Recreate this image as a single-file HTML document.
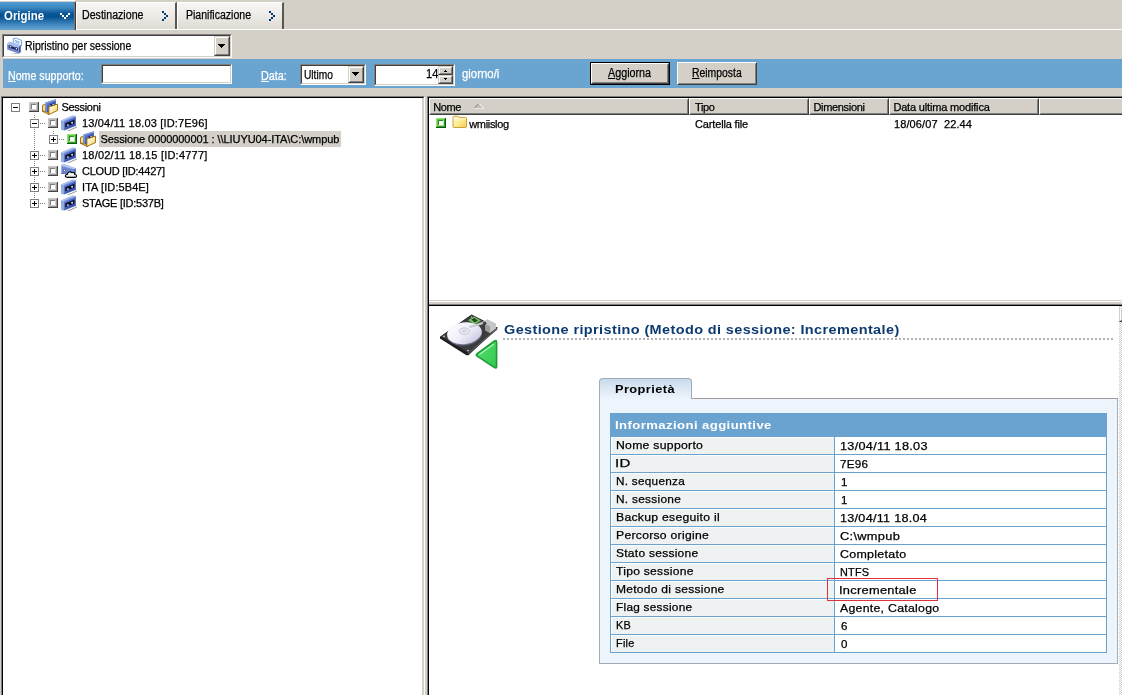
<!DOCTYPE html>
<html><head><meta charset="utf-8">
<style>
*{box-sizing:border-box;margin:0;padding:0}
html,body{width:1122px;height:695px;overflow:hidden;background:#d4d0c8;font-family:"Liberation Sans",sans-serif;font-size:11px;color:#000}
.abs{position:absolute}
#root{position:relative;width:1122px;height:695px;overflow:hidden;will-change:transform}
.t{position:absolute;white-space:nowrap;line-height:13px;font-size:11px;transform-origin:0 0;-webkit-text-stroke:0.25px currentColor}
.v{font-size:11px;letter-spacing:.55px}
/* tabs */
.tab{position:absolute;top:2px;height:27px;font-size:12px;white-space:nowrap}
.tab.g{background:linear-gradient(#f7f6f4 0%,#efede9 40%,#dedbd4 100%);border-top:1px solid #fff;border-left:1px solid #fff;border-right:2px solid #5a5751;}
.tab.sel{background:linear-gradient(#4f9ad0 0%,#3c88c2 20%,#0a5595 42%,#05508f 52%,#3a82bc 78%,#6ba6d4 100%)}
/* sunken */
.sunk{position:absolute;background:#fff;border:1px solid;border-color:#808080 #fff #fff #808080;}
.sunk:before{content:"";position:absolute;left:0;top:0;right:0;bottom:0;border:1px solid;border-color:#404040 #d4d0c8 #d4d0c8 #404040;pointer-events:none}
.sunk.p:before{border-color:#000 #d4d0c8 #d4d0c8 #000}
.btn{position:absolute;background:#d4d0c8;border:1px solid;border-color:#fff #404040 #404040 #fff;}
.btn:before{content:"";position:absolute;left:0;top:0;right:0;bottom:0;border:1px solid;border-color:#d4d0c8 #808080 #808080 #d4d0c8}
.cbtn{position:absolute;background:#d4d0c8;border:1px solid;border-color:#d4d0c8 #404040 #404040 #d4d0c8;}
.cbtn:before{content:"";position:absolute;left:0;top:0;right:0;bottom:0;border:1px solid;border-color:#fff #808080 #808080 #fff}
.arr{position:absolute;width:0;height:0;border-left:4px solid transparent;border-right:4px solid transparent;border-top:4px solid #000}
.u{text-decoration:underline}
svg{position:absolute;overflow:visible}
</style></head><body><svg width="0" height="0" style="position:absolute;left:-100px;top:-100px">
<defs>
<linearGradient id="gTape" x1="0" y1="0" x2="1" y2="1"><stop offset="0" stop-color="#7690dc"/><stop offset=".45" stop-color="#4562bc"/><stop offset="1" stop-color="#2a4296"/></linearGradient>
<linearGradient id="gTapeL" x1="0" y1="0" x2="1" y2="0"><stop offset="0" stop-color="#5f7fd0"/><stop offset=".6" stop-color="#a8bcf0"/><stop offset="1" stop-color="#6c88d8"/></linearGradient>
<linearGradient id="gFold" x1="0" y1="0" x2="1" y2="1"><stop offset="0" stop-color="#ffffff"/><stop offset=".45" stop-color="#fdf0bc"/><stop offset="1" stop-color="#efc348"/></linearGradient>
<linearGradient id="gFold2" x1="0" y1="0" x2="1" y2="1"><stop offset="0" stop-color="#fffbe0"/><stop offset=".55" stop-color="#fde98e"/><stop offset="1" stop-color="#f2c94c"/></linearGradient>
<linearGradient id="gCloud" x1="0" y1="0" x2="0" y2="1"><stop offset="0" stop-color="#ffffff"/><stop offset=".6" stop-color="#f2f2f2"/><stop offset="1" stop-color="#cfcfcf"/></linearGradient>
<linearGradient id="gPlat" x1="0" y1="0" x2="1" y2="1"><stop offset="0" stop-color="#ffffff"/><stop offset=".5" stop-color="#f1eff9"/><stop offset=".82" stop-color="#cfd0e6"/><stop offset="1" stop-color="#a4a8c6"/></linearGradient>
<linearGradient id="gArr" x1="0" y1="0" x2="1" y2="1"><stop offset="0" stop-color="#58e070"/><stop offset="1" stop-color="#30c850"/></linearGradient>

<symbol id="ck" viewBox="0 0 10 10">
<rect width="10" height="10" fill="#454545"/><rect width="9" height="9" fill="#c9c9c9"/>
<rect x="1" y="1" width="8" height="8" fill="#9a9a9a"/><rect x="1" y="1" width="7" height="7" fill="#bababa"/>
<rect x="2" y="2" width="6" height="6" fill="#cfcfcf"/><rect x="2" y="2" width="5" height="5" fill="#7e7e7e"/>
<rect x="3" y="3" width="4" height="4" fill="#fff"/>
</symbol>
<symbol id="ckg" viewBox="0 0 10 10">
<rect width="10" height="10" fill="#0b5c12"/><rect width="9" height="9" fill="#8fe06c"/>
<rect x="1" y="1" width="8" height="8" fill="#2f9a2c"/><rect x="1" y="1" width="7" height="7" fill="#66cc48"/>
<rect x="2" y="2" width="6" height="6" fill="#a8ea90"/><rect x="2" y="2" width="5" height="5" fill="#2a8a2a"/>
<rect x="3" y="3" width="4" height="4" fill="#fff"/>
</symbol>

<symbol id="itape" viewBox="0 0 16 16">
<polygon points="5.6,16 16,11.2 16,12.6 8.4,16" fill="#8a8a8a" opacity=".75"/>
<polygon points="0.2,5.3 11.8,0.2 14.8,1.3 3,6" fill="#a9bcf0"/>
<polygon points="0.2,5.3 3,6 3.2,15.6 0.4,15" fill="url(#gTapeL)"/>
<polygon points="3,6 14.8,1.3 14.8,10.7 3.2,15.6" fill="url(#gTape)"/>
<polygon points="3,6 14.8,1.3 14.8,2.4 3,7.1" fill="#7d96da" opacity=".8"/>
<polygon points="4.3,8.3 13.4,4.7 13.4,8.5 4.3,12.2" fill="#0a1030"/>
<circle cx="6.9" cy="10.1" r=".95" fill="#e6e6ee"/><circle cx="11.1" cy="7.7" r=".95" fill="#e6e6ee"/>
</symbol>

<symbol id="ifold" viewBox="0 0 16 16">
<polygon points="0.5,6.3 3.6,5.2 3.6,12.6 0.5,12.4" fill="#f6dc90" stroke="#9c6600" stroke-width=".9"/>
<polygon points="0.5,12.3 7,15.6 7,14 3.2,12.2" fill="#f1cf6a" stroke="#9c6600" stroke-width=".9"/>
<polygon points="3.2,3.4 13.9,0.3 13.9,6 7,8.2 7,13.6 3.4,12.6" fill="url(#gTape)"/>
<polygon points="3.2,3.4 13.9,0.3 13.9,1.8 4.6,4.6 4.8,12.9 3.4,12.6" fill="#8ca6e8" opacity=".85"/>
<polygon points="8.4,5.6 12,4.4 12,6.4 8.4,7.6" fill="#0c1230"/>
<circle cx="11.1" cy="5.6" r=".8" fill="#eee"/><circle cx="8.2" cy="7.3" r=".8" fill="#eee"/>
<polygon points="6.9,7.9 15.5,5.2 15.5,11.5 6.9,15.5" fill="url(#gFold)" stroke="#9c6600" stroke-width=".9" stroke-linejoin="round"/>
</symbol>

<symbol id="icloud" viewBox="0 0 16 16">
<polygon points="0.2,1.9 2.5,1 14.8,5.3 14.8,10.2 0.2,11" fill="#8aa0de"/>
<polygon points="1.2,3.4 13.4,6.8 13.4,10.2 1.2,10.6" fill="#6c86d0"/>
<polygon points="0.2,1.9 2.5,1 14.8,5.3 14.8,6.4 0.2,2.9" fill="#b4c5f3"/>
<polygon points="13.2,6.2 14.8,5.6 14.8,10.2 13.2,10.2" fill="#4a64b6"/>
<polygon points="0.2,10 14.8,9.4 14.8,10.3 0.2,11" fill="#5670c0"/>
<circle cx="3.5" cy="7.5" r="1.3" fill="#3a4f9c"/><circle cx="3.5" cy="7.5" r=".75" fill="#fff"/>
<path d="M6.4 14.4 C3.6 14.4 3.8 11.3 6.3 11.4 C6.5 8.9 9.6 8 10.8 9.8 C12.6 8.8 14 10.2 13.6 11.5 C16.2 11.4 16.2 14.4 13.8 14.4 Z" fill="url(#gCloud)" stroke="#000" stroke-width="1.1" stroke-linejoin="round"/>
</symbol>

<symbol id="ifolder" viewBox="0 0 16 14">
<path d="M1 2.5 Q1 1.3 2.2 1.3 L5.6 1.3 Q6.6 1.3 7 2.4 L13.5 2.4 Q14.5 2.4 14.5 3.4 L14.5 11.6 Q14.5 12.5 13.5 12.5 L2 12.5 Q1 12.5 1 11.6 Z" fill="url(#gFold2)" stroke="#c8962a" stroke-width=".9"/>
<path d="M1.6 3.8 L14 3.8" stroke="#fff8d8" stroke-width=".8" fill="none"/>
</symbol>
</defs></svg>
<div id="root">

<!-- ============ TAB ROW ============ -->
<div class="abs" style="left:0;top:0;width:75px;height:1px;background:#fff"></div>
<div class="abs" style="left:76px;top:29px;width:1046px;height:1px;background:#fff"></div>
<div class="tab sel" style="left:0;width:74px;height:28px"></div><div class="abs" style="left:74px;top:2px;width:1px;height:28px;background:#7d7872"></div><div class="abs" style="left:75px;top:2px;width:1px;height:28px;background:#3c3c3c"></div>
<div class="t" id="t_origine" style="left:4.0px;top:8px;font-size:12px;line-height:16px;font-weight:bold;color:#fff;transform:scaleX(0.9527);-webkit-text-stroke:0">Origine</div>
<svg style="left:60px;top:13px" width="10" height="6" viewBox="0 0 10 6" shape-rendering="crispEdges"><path d="M0 0h2v2h-2zM2 2h2v2h-2zM4 4h2v2h-2zM6 2h2v2h-2zM8 0h2v2h-2z" fill="#fff"/></svg>
<div class="tab g" style="left:76px;width:101px"></div>
<div class="t" id="t_dest" style="left:82.0px;top:7px;font-size:12px;line-height:16px;transform:scaleX(0.8861)">Destinazione</div>
<svg style="left:162px;top:11px" width="6" height="10" viewBox="0 0 6 10" shape-rendering="crispEdges"><path d="M0 0h2v2h-2zM2 2h2v2h-2zM4 4h2v2h-2zM2 6h2v2h-2zM0 8h2v2h-2z" fill="#003c74"/></svg>
<div class="tab g" style="left:177px;width:107px"></div>
<div class="t" id="t_pian" style="left:186.0px;top:7px;font-size:12px;line-height:16px;transform:scaleX(0.8784)">Pianificazione</div>
<svg style="left:269px;top:11px" width="6" height="10" viewBox="0 0 6 10" shape-rendering="crispEdges"><path d="M0 0h2v2h-2zM2 2h2v2h-2zM4 4h2v2h-2zM2 6h2v2h-2zM0 8h2v2h-2z" fill="#003c74"/></svg>

<!-- ============ DROPDOWN ============ -->
<div class="sunk" style="left:2px;top:34px;width:230px;height:24px"></div>
<svg style="left:7px;top:38px" width="16" height="16" viewBox="0 0 16 16">
<polygon points="3,15.9 12,16 14.6,14.2 13.8,13.6" fill="#999" opacity=".5"/>
<polygon points="6.2,0.6 9.4,0.2 14.6,2.4 14.5,8 6.4,6" fill="#eef7ff" stroke="#5b8fd6" stroke-width=".8"/>
<path d="M8 2.4 L12.6 4.2 M8.4 4 L12 5.4" stroke="#6fa0de" stroke-width=".9" fill="none"/>
<polygon points="0.2,5.6 2.6,3.6 13.8,7.2 11.5,9.2" fill="#aabef2"/>
<polygon points="11.5,9.2 13.8,7.2 13.8,13.8 11.5,15.6" fill="#3d55a6"/>
<polygon points="0.2,5.6 11.5,9.2 11.5,15.6 0.2,11.6" fill="#7088d2"/>
<polygon points="0.2,5.6 11.5,9.2 11.5,10 0.2,6.4" fill="#b4c6f4"/>
<polygon points="1.8,7.6 10.9,10.5 10.9,12.4 1.8,9.6" fill="#1a244e"/>
<circle cx="3.5" cy="8.7" r="1.5" fill="#1a244e"/><circle cx="9.4" cy="10.7" r="1.5" fill="#1a244e"/>
<circle cx="3.5" cy="8.7" r=".8" fill="#fff"/><circle cx="9.4" cy="10.7" r=".8" fill="#fff"/>
</svg>
<div class="t" id="t_rip" style="font-size:12px;line-height:16px;left:24.6px;top:38px;transform:scaleX(0.8757)">Ripristino per sessione</div>
<div class="cbtn" style="left:214px;top:36px;width:16px;height:20px"><svg style="left:3px;top:7px" width="7" height="4" viewBox="0 0 7 4" shape-rendering="crispEdges"><path d="M0 0h7v1h-1v1h-1v1h-1v1h-1v-1h-1v-1h-1v-1h-1z" fill="#000"/></svg></div>

<!-- ============ BLUE BAR ============ -->
<div class="abs" style="left:3px;top:59px;width:1119px;height:29px;background:#6aa5d1"></div>
<div class="t" id="t_nome" style="font-size:12px;line-height:16px;left:8.0px;top:68px;color:#fff;transform:scaleX(0.8871)"><span class="u">N</span>ome supporto:</div>
<div class="sunk" style="left:101px;top:64px;width:131px;height:20px"></div>
<div class="t" id="t_data" style="font-size:12px;line-height:16px;left:261.0px;top:68px;color:#fff;transform:scaleX(0.9010)"><span class="u">D</span>ata:</div>
<div class="sunk" style="left:300px;top:64px;width:66px;height:21px"></div>
<div class="t" id="t_ult" style="font-size:12px;line-height:16px;left:304.2px;top:67px;transform:scaleX(0.8477)">Ultimo</div>
<div class="cbtn" style="left:348px;top:66px;width:16px;height:17px"><svg style="left:3px;top:5px" width="7" height="4" viewBox="0 0 7 4" shape-rendering="crispEdges"><path d="M0 0h7v1h-1v1h-1v1h-1v1h-1v-1h-1v-1h-1v-1h-1z" fill="#000"/></svg></div>
<div class="sunk" style="left:374px;top:64px;width:81px;height:22px"></div>
<div class="t" id="t_14" style="font-size:12px;line-height:16px;left:426.0px;top:66px;transform:scaleX(0.9284)">14</div>
<div class="cbtn" style="left:438px;top:66px;width:15px;height:9px"><svg style="left:5px;top:3px" width="3" height="2" viewBox="0 0 3 2" shape-rendering="crispEdges"><path d="M1 0h1v1h1v1h-3v-1h1z" fill="#000"/></svg></div>
<div class="cbtn" style="left:438px;top:75px;width:15px;height:9px"><svg style="left:5px;top:2px" width="3" height="2" viewBox="0 0 3 2" shape-rendering="crispEdges"><path d="M0 0h3v1h-1v1h-1v-1h-1z" fill="#000"/></svg></div>
<div class="t" id="t_giorno" style="font-size:12px;line-height:16px;left:462.0px;top:66px;color:#fff;transform:scaleX(0.9487)">giorno/i</div>
<!-- buttons -->
<div class="abs" style="left:590px;top:62px;width:80px;height:23px;background:#000"></div>
<div class="btn" style="left:591px;top:63px;width:78px;height:21px"></div>
<div class="t" id="t_agg" style="font-size:12px;line-height:16px;left:608.4px;top:65px;transform:scaleX(0.8966)"><span class="u">A</span>ggiorna</div>
<div class="btn" style="left:677px;top:62px;width:80px;height:23px"></div>
<div class="t" id="t_reim" style="font-size:12px;line-height:16px;left:691.8px;top:65px;transform:scaleX(0.8658)"><span class="u">R</span>eimposta</div>

<!-- ============ LEFT TREE ============ -->
<div class="sunk p" style="left:1px;top:96px;width:424px;height:610px"></div><div class="abs" style="left:422px;top:98px;width:1px;height:600px;background:#d4d0c8"></div>
<!--TREE-->
<div class="abs" style="left:11px;top:103px;width:9px;height:9px;border:1px solid #808080;background:#fff"><div class="abs" style="left:1px;top:3px;width:5px;height:1px;background:#000"></div></div>
<svg style="left:29px;top:102px" width="10" height="10"><use href="#ck"/></svg>
<svg style="left:42px;top:99px" width="16" height="16"><use href="#ifold"/></svg>
<div class="t" id="tr0" style="left:61.4px;top:101px;letter-spacing:-0.285px">Sessioni</div>
<div class="abs" style="left:34px;top:115px;width:1px;height:3px;background:repeating-linear-gradient(#808080 0 1px,transparent 1px 2px)"></div>
<div class="abs" style="left:30px;top:119px;width:9px;height:9px;border:1px solid #808080;background:#fff"><div class="abs" style="left:1px;top:3px;width:5px;height:1px;background:#000"></div></div>
<div class="abs" style="left:40px;top:123px;width:5px;height:1px;background:repeating-linear-gradient(90deg,#808080 0 1px,transparent 1px 2px)"></div>
<svg style="left:48px;top:118px" width="10" height="10"><use href="#ck"/></svg>
<svg style="left:61px;top:115px" width="16" height="16"><use href="#itape"/></svg>
<div class="t" id="tr1" style="left:82.0px;top:117px;letter-spacing:0.173px">13/04/11 18.03 [ID:7E96]</div>
<div class="abs" style="left:34px;top:129px;width:1px;height:21px;background:repeating-linear-gradient(#808080 0 1px,transparent 1px 2px)"></div>
<div class="abs" style="left:30px;top:151px;width:9px;height:9px;border:1px solid #808080;background:#fff"><div class="abs" style="left:1px;top:3px;width:5px;height:1px;background:#000"></div><div class="abs" style="left:3px;top:1px;width:1px;height:5px;background:#000"></div></div>
<div class="abs" style="left:40px;top:155px;width:5px;height:1px;background:repeating-linear-gradient(90deg,#808080 0 1px,transparent 1px 2px)"></div>
<svg style="left:48px;top:150px" width="10" height="10"><use href="#ck"/></svg>
<svg style="left:61px;top:147px" width="16" height="16"><use href="#itape"/></svg>
<div class="t" id="tr3" style="left:82.0px;top:149px;letter-spacing:0.218px">18/02/11 18.15 [ID:4777]</div>
<div class="abs" style="left:34px;top:161px;width:1px;height:5px;background:repeating-linear-gradient(#808080 0 1px,transparent 1px 2px)"></div>
<div class="abs" style="left:30px;top:167px;width:9px;height:9px;border:1px solid #808080;background:#fff"><div class="abs" style="left:1px;top:3px;width:5px;height:1px;background:#000"></div><div class="abs" style="left:3px;top:1px;width:1px;height:5px;background:#000"></div></div>
<div class="abs" style="left:40px;top:171px;width:5px;height:1px;background:repeating-linear-gradient(90deg,#808080 0 1px,transparent 1px 2px)"></div>
<svg style="left:48px;top:166px" width="10" height="10"><use href="#ck"/></svg>
<svg style="left:61px;top:163px" width="16" height="16"><use href="#icloud"/></svg>
<div class="t" id="tr4" style="left:82.0px;top:165px;letter-spacing:-0.230px">CLOUD [ID:4427]</div>
<div class="abs" style="left:34px;top:177px;width:1px;height:5px;background:repeating-linear-gradient(#808080 0 1px,transparent 1px 2px)"></div>
<div class="abs" style="left:30px;top:183px;width:9px;height:9px;border:1px solid #808080;background:#fff"><div class="abs" style="left:1px;top:3px;width:5px;height:1px;background:#000"></div><div class="abs" style="left:3px;top:1px;width:1px;height:5px;background:#000"></div></div>
<div class="abs" style="left:40px;top:187px;width:5px;height:1px;background:repeating-linear-gradient(90deg,#808080 0 1px,transparent 1px 2px)"></div>
<svg style="left:48px;top:182px" width="10" height="10"><use href="#ck"/></svg>
<svg style="left:61px;top:179px" width="16" height="16"><use href="#itape"/></svg>
<div class="t" id="tr5" style="left:82.0px;top:181px;letter-spacing:0.083px">ITA [ID:5B4E]</div>
<div class="abs" style="left:34px;top:193px;width:1px;height:5px;background:repeating-linear-gradient(#808080 0 1px,transparent 1px 2px)"></div>
<div class="abs" style="left:30px;top:199px;width:9px;height:9px;border:1px solid #808080;background:#fff"><div class="abs" style="left:1px;top:3px;width:5px;height:1px;background:#000"></div><div class="abs" style="left:3px;top:1px;width:1px;height:5px;background:#000"></div></div>
<div class="abs" style="left:40px;top:203px;width:5px;height:1px;background:repeating-linear-gradient(90deg,#808080 0 1px,transparent 1px 2px)"></div>
<svg style="left:48px;top:198px" width="10" height="10"><use href="#ck"/></svg>
<svg style="left:61px;top:195px" width="16" height="16"><use href="#itape"/></svg>
<div class="t" id="tr6" style="left:82.0px;top:197px;letter-spacing:-0.256px">STAGE [ID:537B]</div>
<div class="abs" style="left:53px;top:131px;width:1px;height:3px;background:repeating-linear-gradient(#808080 0 1px,transparent 1px 2px)"></div>
<div class="abs" style="left:49px;top:135px;width:9px;height:9px;border:1px solid #808080;background:#fff"><div class="abs" style="left:1px;top:3px;width:5px;height:1px;background:#000"></div><div class="abs" style="left:3px;top:1px;width:1px;height:5px;background:#000"></div></div>
<div class="abs" style="left:59px;top:139px;width:5px;height:1px;background:repeating-linear-gradient(90deg,#808080 0 1px,transparent 1px 2px)"></div>
<svg style="left:67px;top:134px" width="10" height="10"><use href="#ckg"/></svg>
<svg style="left:80px;top:131px" width="16" height="16"><use href="#ifold"/></svg>
<div class="abs" style="left:99px;top:131px;width:242px;height:16px;background:#d4d0c8"></div>
<div class="t" id="tr2" style="left:100.4px;top:133px;letter-spacing:-0.069px">Sessione 0000000001 : \\LIUYU04-ITA\C:\wmpub</div>
<!--/TREE-->
<!-- ============ RIGHT LIST ============ -->
<div class="sunk p" style="left:427px;top:96px;width:701px;height:610px"></div>
<!--LIST-->
<div class="abs" style="left:429px;top:98px;width:260px;height:17px;background:#d4d0c8;border:1px solid;border-color:#fff #404040 #404040 #fff"><div class="abs" style="left:0;top:0;right:0;bottom:0;border:1px solid;border-color:#d4d0c8 #808080 #808080 #d4d0c8"></div></div>
<div class="t" id="lh0" style="left:433.2px;top:101px;letter-spacing:-0.401px">Nome</div>
<div class="abs" style="left:689px;top:98px;width:120px;height:17px;background:#d4d0c8;border:1px solid;border-color:#fff #404040 #404040 #fff"><div class="abs" style="left:0;top:0;right:0;bottom:0;border:1px solid;border-color:#d4d0c8 #808080 #808080 #d4d0c8"></div></div>
<div class="t" id="lh1" style="left:695.0px;top:101px;letter-spacing:-0.333px">Tipo</div>
<div class="abs" style="left:809px;top:98px;width:80px;height:17px;background:#d4d0c8;border:1px solid;border-color:#fff #404040 #404040 #fff"><div class="abs" style="left:0;top:0;right:0;bottom:0;border:1px solid;border-color:#d4d0c8 #808080 #808080 #d4d0c8"></div></div>
<div class="t" id="lh2" style="left:813.4px;top:101px;letter-spacing:-0.312px">Dimensioni</div>
<div class="abs" style="left:889px;top:98px;width:150px;height:17px;background:#d4d0c8;border:1px solid;border-color:#fff #404040 #404040 #fff"><div class="abs" style="left:0;top:0;right:0;bottom:0;border:1px solid;border-color:#d4d0c8 #808080 #808080 #d4d0c8"></div></div>
<div class="t" id="lh3" style="left:893.4px;top:101px;letter-spacing:-0.169px">Data ultima modifica</div>
<div class="abs" style="left:1039px;top:98px;width:92px;height:17px;background:#d4d0c8;border:1px solid;border-color:#fff #404040 #404040 #fff"><div class="abs" style="left:0;top:0;right:0;bottom:0;border:1px solid;border-color:#d4d0c8 #808080 #808080 #d4d0c8"></div></div>
<svg style="left:474px;top:103px" width="10" height="6" viewBox="0 0 10 6"><path d="M0.5 5.5 L4.75 0.3 L9.5 5.5 Z" fill="#bfbcb5"/><path d="M0.3 5.2 L4.6 0.4" stroke="#8a8882" stroke-width="1" fill="none"/><path d="M5 0.4 L9.6 5.2" stroke="#fff" stroke-width="1" fill="none"/><path d="M0 5.5 L10 5.5" stroke="#e8e6e2" stroke-width="1" fill="none"/></svg>
<svg style="left:436px;top:118px" width="10" height="10"><use href="#ckg"/></svg>
<svg style="left:452px;top:115px" width="16" height="14"><use href="#ifolder"/></svg>
<div class="t" id="lr0" style="left:469.2px;top:118px;letter-spacing:-0.315px">wmiislog</div>
<div class="t" id="lr1" style="left:695.0px;top:118px;letter-spacing:-0.151px">Cartella file</div>
<div class="t" id="lr2" style="left:894.0px;top:118px;letter-spacing:0.101px">18/06/07&nbsp; 22.44</div>
<!--/LIST-->
<!-- ============ BOTTOM RIGHT ============ -->
<div class="abs" style="left:429px;top:300px;width:693px;height:6px;background:#d4d0c8"></div><div class="abs" style="left:429px;top:301px;width:693px;height:1px;background:#fff"></div><div class="abs" style="left:429px;top:304px;width:693px;height:1px;background:#808080"></div><div class="abs" style="left:429px;top:305px;width:693px;height:1px;background:#000"></div>
<!--BOTTOM-->
<div class="t" id="bt" style="left:504.0px;top:322px;font-size:13px;line-height:16px;font-weight:bold;color:#0b3a70;letter-spacing:0.35px;transform:scaleX(1.1127);-webkit-text-stroke:0">Gestione ripristino (Metodo di sessione: Incrementale)</div>
<div class="abs" style="left:503px;top:338px;width:611px;height:2px;background:repeating-linear-gradient(90deg,#b4b4b4 0 2px,transparent 2px 4px)"></div>
<svg style="left:438px;top:312px" width="62" height="58" viewBox="0 0 62 58">
<polygon points="2,24.8 33.5,2.6 59.8,15.8 30.5,43.2 28.5,43.2 2,26.5" fill="#1a1a1a"/>
<polygon points="2.6,24.4 33.6,3 59,15.6 30,40.4" fill="#3c3c3e"/>
<polygon points="2.6,24.4 30,40.4 30,42.6 2.6,26.2" fill="#222"/>
<polygon points="30,40.4 59,15.6 59.4,17.4 30,42.6" fill="#555"/>
<polygon points="30,8.2 36,4.6 43,8.4 37,12.2" fill="#6cc65a"/>
<polygon points="33.4,7.6 36.4,5.9 39.8,8.6 36.8,10.4" fill="#2e3a2e"/>
<ellipse cx="26.6" cy="22" rx="17.6" ry="11.4" transform="rotate(-8 26.6 22)" fill="#6e7088"/>
<ellipse cx="26.4" cy="21.2" rx="17.4" ry="10.8" transform="rotate(-8 26.4 21.2)" fill="url(#gPlat)"/>
<ellipse cx="26.4" cy="19.2" rx="5.2" ry="3.3" fill="#e8e8f2" stroke="#b8bccc" stroke-width=".8"/>
<ellipse cx="26.4" cy="19.2" rx="2.2" ry="1.4" fill="#d0d4e0"/>
<polygon points="30.5,14.4 45.5,9.6 47.4,11.4 32,16" fill="#c8c8cc"/>
<polygon points="44,10 49.5,7.2 58,11.6 58,16.4 52,21 47.4,18.4 47.4,12" fill="#c4c6ca"/>
<polygon points="47.4,12 52,14.6 52,21 47.4,18.4" fill="#9a9ca0"/>
<circle cx="46.6" cy="11.2" r="1.8" fill="#444"/>
<circle cx="6" cy="24.4" r=".8" fill="#ddd"/><circle cx="30" cy="38.6" r=".8" fill="#ddd"/><circle cx="33.6" cy="5" r=".7" fill="#bbb"/>
<path d="M58.6 30.2 L58.6 54.4 Q58.6 56.6 56.6 55.6 L39.2 44.2 Q37.4 43 39.2 41.6 L56.6 29 Q58.6 27.8 58.6 30.2 Z" fill="url(#gArr)" stroke="#1c9c34" stroke-width="1.6" stroke-linejoin="round"/>
<path d="M41.4 42.6 L56 32" stroke="#d8ffe0" stroke-width="1" fill="none"/>
</svg>
<div class="abs" style="left:599px;top:398px;width:519px;height:266px;background:#edf4fb;border:1px solid #a7adb4;border-color:#9e9e9e #9fadba #9fadba #9fadba"></div>
<div class="abs" style="left:599px;top:378px;width:93px;height:21px;background:linear-gradient(#c8dbec 0%,#dbe8f4 45%,#edf4fb 100%);border:1px solid #9fadba;border-bottom:none;border-radius:4px 4px 0 0"></div>
<div class="t" id="bp" style="left:615.2px;top:383px;font-weight:bold;font-size:11px;letter-spacing:0.35px;transform:scaleX(1.1648);-webkit-text-stroke:0">Proprietà</div>
<div class="abs" style="left:610px;top:413px;width:497px;height:240px;background:#6aa2d0"></div>
<div class="t" id="bh" style="left:614.8px;top:419px;font-weight:bold;font-size:11px;color:#fff;letter-spacing:0.35px;transform:scaleX(1.1924);-webkit-text-stroke:0">Informazioni aggiuntive</div>
<div class="abs" style="left:611px;top:437px;width:223px;height:17px;background:#eef2f3;border-left:1px solid #fff;border-top:1px solid #fff"></div>
<div class="abs" style="left:835px;top:437px;width:271px;height:17px;background:#fff"></div>
<div class="t v" id="k0" style="left:616.2px;top:439px;letter-spacing:0.25px;transform:scaleX(1.1104)">Nome supporto</div>
<div class="t v" id="v0" style="left:840.0px;top:440px;letter-spacing:0.25px;transform:scaleX(1.1530)">13/04/11 18.03</div>
<div class="abs" style="left:611px;top:455px;width:223px;height:17px;background:#eef2f3;border-left:1px solid #fff;border-top:1px solid #fff"></div>
<div class="abs" style="left:835px;top:455px;width:271px;height:17px;background:#fff"></div>
<div class="t v" id="k1" style="left:615.2px;top:457px;letter-spacing:0.25px;transform:scaleX(1.3605)">ID</div>
<div class="t v" id="v1" style="left:840.0px;top:458px;letter-spacing:0.25px;transform:scaleX(1.0611)">7E96</div>
<div class="abs" style="left:611px;top:473px;width:223px;height:17px;background:#eef2f3;border-left:1px solid #fff;border-top:1px solid #fff"></div>
<div class="abs" style="left:835px;top:473px;width:271px;height:17px;background:#fff"></div>
<div class="t v" id="k2" style="left:616.2px;top:475px;letter-spacing:0.25px;transform:scaleX(1.0691)">N. sequenza</div>
<div class="t v" id="v2" style="left:840.5px;top:476px;letter-spacing:0.25px;transform:scaleX(1.05)">1</div>
<div class="abs" style="left:611px;top:491px;width:223px;height:17px;background:#eef2f3;border-left:1px solid #fff;border-top:1px solid #fff"></div>
<div class="abs" style="left:835px;top:491px;width:271px;height:17px;background:#fff"></div>
<div class="t v" id="k3" style="left:616.2px;top:493px;letter-spacing:0.25px;transform:scaleX(1.0809)">N. sessione</div>
<div class="t v" id="v3" style="left:840.5px;top:494px;letter-spacing:0.25px;transform:scaleX(1.05)">1</div>
<div class="abs" style="left:611px;top:509px;width:223px;height:17px;background:#eef2f3;border-left:1px solid #fff;border-top:1px solid #fff"></div>
<div class="abs" style="left:835px;top:509px;width:271px;height:17px;background:#fff"></div>
<div class="t v" id="k4" style="left:616.2px;top:511px;letter-spacing:0.25px;transform:scaleX(1.1082)">Backup eseguito il</div>
<div class="t v" id="v4" style="left:840.0px;top:512px;letter-spacing:0.25px;transform:scaleX(1.1452)">13/04/11 18.04</div>
<div class="abs" style="left:611px;top:527px;width:223px;height:17px;background:#eef2f3;border-left:1px solid #fff;border-top:1px solid #fff"></div>
<div class="abs" style="left:835px;top:527px;width:271px;height:17px;background:#fff"></div>
<div class="t v" id="k5" style="left:616.2px;top:529px;letter-spacing:0.25px;transform:scaleX(1.1065)">Percorso origine</div>
<div class="t v" id="v5" style="left:840.0px;top:530px;letter-spacing:0.25px;transform:scaleX(1.1659)">C:\wmpub</div>
<div class="abs" style="left:611px;top:545px;width:223px;height:17px;background:#eef2f3;border-left:1px solid #fff;border-top:1px solid #fff"></div>
<div class="abs" style="left:835px;top:545px;width:271px;height:17px;background:#fff"></div>
<div class="t v" id="k6" style="left:615.6px;top:547px;letter-spacing:0.25px;transform:scaleX(1.0896)">Stato sessione</div>
<div class="t v" id="v6" style="left:840.0px;top:548px;letter-spacing:0.25px;transform:scaleX(1.1292)">Completato</div>
<div class="abs" style="left:611px;top:563px;width:223px;height:17px;background:#eef2f3;border-left:1px solid #fff;border-top:1px solid #fff"></div>
<div class="abs" style="left:835px;top:563px;width:271px;height:17px;background:#fff"></div>
<div class="t v" id="k7" style="left:615.6px;top:565px;letter-spacing:0.25px;transform:scaleX(1.0990)">Tipo sessione</div>
<div class="t v" id="v7" style="left:840.0px;top:566px;letter-spacing:0.25px;transform:scaleX(0.9883)">NTFS</div>
<div class="abs" style="left:611px;top:581px;width:223px;height:17px;background:#eef2f3;border-left:1px solid #fff;border-top:1px solid #fff"></div>
<div class="abs" style="left:835px;top:581px;width:271px;height:17px;background:#fff"></div>
<div class="t v" id="k8" style="left:615.6px;top:583px;letter-spacing:0.25px;transform:scaleX(1.0934)">Metodo di sessione</div>
<div class="t v" id="v8" style="left:839.0px;top:584px;letter-spacing:0.25px;transform:scaleX(1.1651)">Incrementale</div>
<div class="abs" style="left:611px;top:599px;width:223px;height:17px;background:#eef2f3;border-left:1px solid #fff;border-top:1px solid #fff"></div>
<div class="abs" style="left:835px;top:599px;width:271px;height:17px;background:#fff"></div>
<div class="t v" id="k9" style="left:615.6px;top:601px;letter-spacing:0.25px;transform:scaleX(1.0739)">Flag sessione</div>
<div class="t v" id="v9" style="left:840.0px;top:602px;letter-spacing:0.25px;transform:scaleX(1.1168)">Agente, Catalogo</div>
<div class="abs" style="left:611px;top:617px;width:223px;height:17px;background:#eef2f3;border-left:1px solid #fff;border-top:1px solid #fff"></div>
<div class="abs" style="left:835px;top:617px;width:271px;height:17px;background:#fff"></div>
<div class="t v" id="k10" style="left:615.6px;top:619px;letter-spacing:0.25px;transform:scaleX(0.9882)">KB</div>
<div class="t v" id="v10" style="left:840.5px;top:620px;letter-spacing:0.25px;transform:scaleX(1.05)">6</div>
<div class="abs" style="left:611px;top:635px;width:223px;height:17px;background:#eef2f3;border-left:1px solid #fff;border-top:1px solid #fff"></div>
<div class="abs" style="left:835px;top:635px;width:271px;height:17px;background:#fff"></div>
<div class="t v" id="k11" style="left:615.6px;top:637px;letter-spacing:0.25px;transform:scaleX(0.9931)">File</div>
<div class="t v" id="v11" style="left:840.5px;top:638px;letter-spacing:0.25px;transform:scaleX(1.05)">0</div>
<div class="abs" style="left:827px;top:578px;width:111px;height:23px;border:1px solid #e0313f"></div>
<div class="abs" style="left:1119px;top:306px;width:3px;height:389px;background:repeating-conic-gradient(#fff 0 25%,#d4d0c8 0 50%) 0 0/2px 2px"></div>
<div class="abs" style="left:1119px;top:306px;width:16px;height:16px;background:#d4d0c8;border:1px solid;border-color:#d4d0c8 #404040 #404040 #d4d0c8"><div class="abs" style="left:0;top:0;right:0;bottom:0;border:1px solid;border-color:#fff #808080 #808080 #fff"></div></div>
<!--/BOTTOM-->

</div></body></html>
